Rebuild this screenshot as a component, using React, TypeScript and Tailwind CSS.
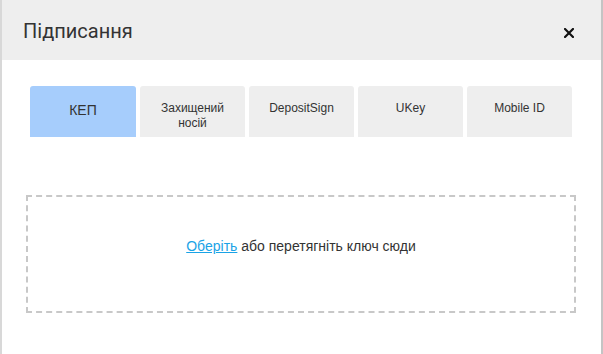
import React from "react";

const tabs = [
  { label: "КЕП", active: true },
  { label: "Захищений носій", active: false },
  { label: "DepositSign", active: false },
  { label: "UKey", active: false },
  { label: "Mobile ID", active: false },
];

export default function App() {
  return (
    <div className="w-[603px] h-[354px] flex bg-[#d4d4d4] overflow-hidden" style={{ fontFamily: "'Liberation Sans', Arial, sans-serif" }}>
      <div className="w-[2px] shrink-0 bg-[#d8d8d8]" />
      <div className="w-[599px] flex flex-col bg-white">
        <div className="h-[60px] bg-[#eeeeee] flex items-center pl-[21px] pr-[27px] justify-between shrink-0">
          <div className="text-[20px] text-[#333333] pt-[1px]" style={{ fontFamily: "Roboto, 'Liberation Sans', sans-serif" }}>
            Підписання
          </div>
          <svg width="10" height="10" viewBox="0 0 10 10" className="mt-[5px]">
            <path d="M1 1L9 9M9 1L1 9" stroke="#111" strokeWidth="2.2" strokeLinecap="square" />
          </svg>
        </div>
        <div className="flex gap-[4px] pl-[28px] pt-[26px] pr-[28px]">
          {tabs.map((t) => (
            <div
              key={t.label}
              className={
                t.active
                  ? "w-[106px] h-[51px] rounded-t-[3px] bg-[#a6cdfc] text-[#333333] text-[14px] text-center pt-[16px] leading-[16px]"
                  : "w-[105px] h-[51px] rounded-t-[3px] bg-[#eeeeee] text-[#333333] text-[12px] text-center pt-[15px] leading-[15px] px-[10px]"
              }
            >
              {t.label}
            </div>
          ))}
        </div>
        <div className="ml-[24px] mt-[58px] w-[550px] h-[118px] border-2 border-dashed border-[#c8c8c8] pt-[41px] text-center">
          <div className="text-[14px] leading-[16px] text-[#333333]">
            <a className="text-[#1aa3e6] underline cursor-pointer">Оберіть</a> або перетягніть ключ сюди
          </div>
        </div>
      </div>
      <div className="w-[2px] shrink-0 bg-[#c4c4c4]" />
    </div>
  );
}
